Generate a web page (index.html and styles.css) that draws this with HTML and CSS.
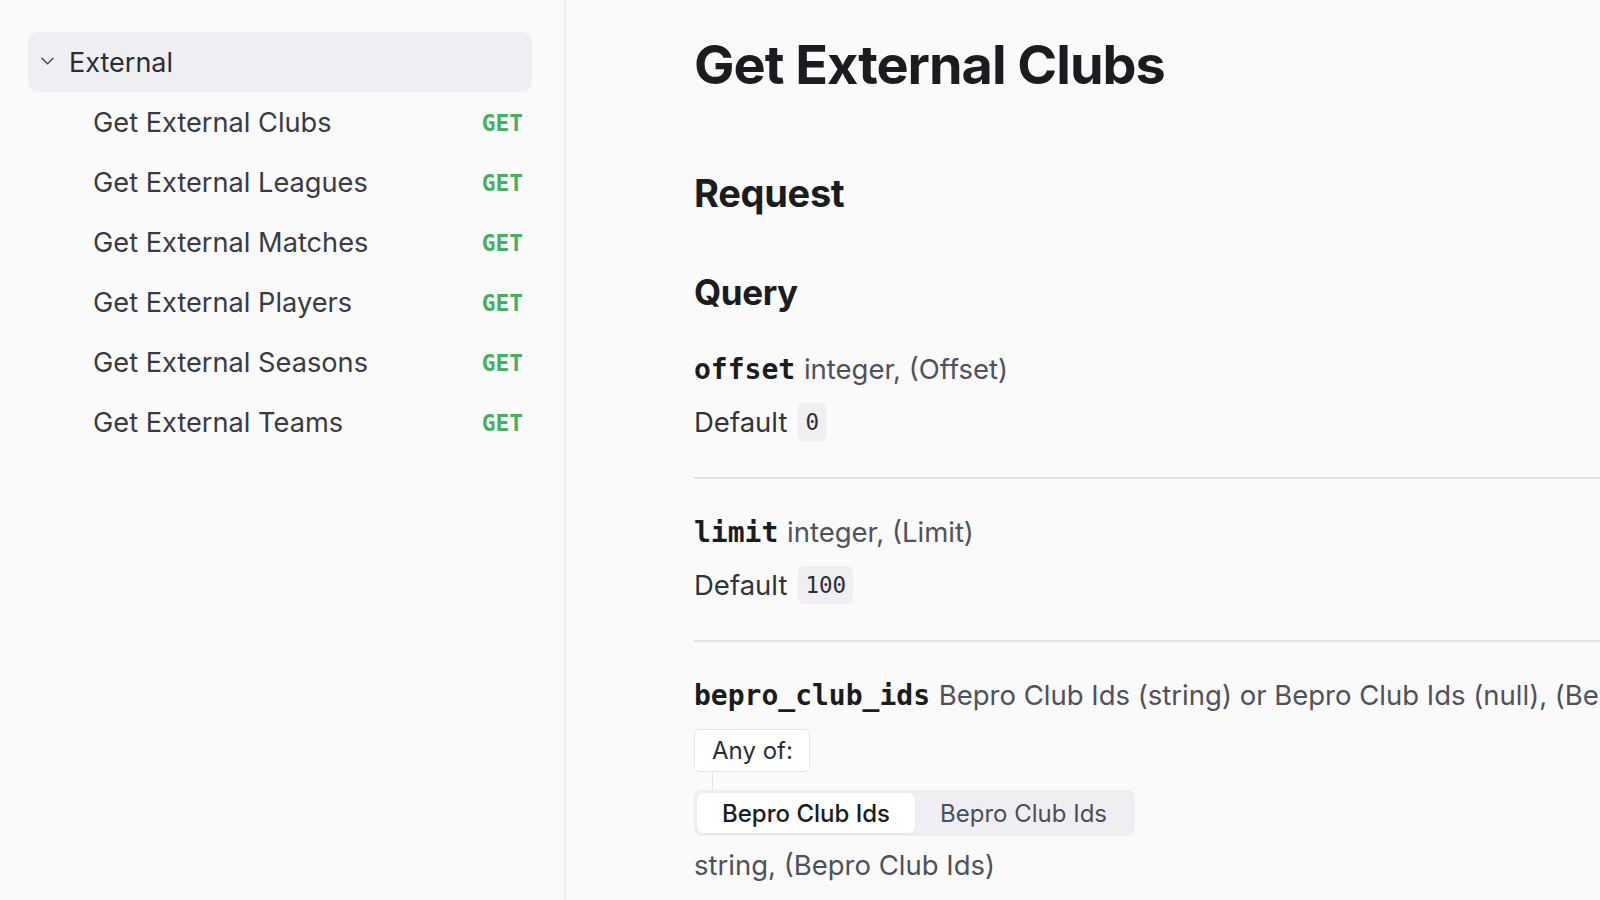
FILE: index.html
```html
<!DOCTYPE html>
<html lang="en">
<head>
<meta charset="utf-8">
<title>Get External Clubs</title>
<link rel="stylesheet" href="styles.css">
</head>
<body>
<div class="layout">
  <aside class="sidebar">
    <div class="group-header">
      <svg class="chevron" width="13" height="8" viewBox="0 0 13 8"><path d="M1 1.2l5.5 5.5 5.5-5.5" fill="none" stroke="#4a4b52" stroke-width="1.5" stroke-linecap="round" stroke-linejoin="round"/></svg>
      <span>External</span>
    </div>
    <ul class="nav">
      <li class="nav-item"><span>Get External Clubs</span><span class="method">GET</span></li>
      <li class="nav-item"><span>Get External Leagues</span><span class="method">GET</span></li>
      <li class="nav-item"><span>Get External Matches</span><span class="method">GET</span></li>
      <li class="nav-item"><span>Get External Players</span><span class="method">GET</span></li>
      <li class="nav-item"><span>Get External Seasons</span><span class="method">GET</span></li>
      <li class="nav-item"><span>Get External Teams</span><span class="method">GET</span></li>
    </ul>
  </aside>
  <main class="main">
    <h1 class="title">Get External Clubs</h1>
    <h2 class="section">Request</h2>
    <h3 class="subsection">Query</h3>
    <div class="param">
      <div class="param-head"><code class="param-name">offset</code> <span class="param-desc">integer, (Offset)</span></div>
      <div class="default-row"><span>Default</span><code class="pill">0</code></div>
    </div>
    <div class="param">
      <div class="param-head"><code class="param-name">limit</code> <span class="param-desc">integer, (Limit)</span></div>
      <div class="default-row"><span>Default</span><code class="pill">100</code></div>
    </div>
    <div class="param param-last">
      <div class="param-head"><code class="param-name">bepro_club_ids</code> <span class="param-desc">Bepro Club Ids (string) or Bepro Club Ids (null), (Bepro Club Ids)</span></div>
      <div class="anyof">Any of:</div>
      <div class="connector"></div>
      <div class="tabs">
        <span class="tab tab-active">Bepro Club Ids</span>
        <span class="tab">Bepro Club Ids</span>
      </div>
      <div class="type-row">string, (Bepro Club Ids)</div>
    </div>
  </main>
</div>
</body>
</html>
```
FILE: styles.css
```css
html, body {
  margin: 0;
  padding: 0;
  background: #fafafa;
  height: 100%;
  overflow: hidden;
}
body {
  font-family: Inter, "Noto Sans", "Liberation Sans", sans-serif;
  color: #1c1d21;
}
.layout {
  display: flex;
  height: 900px;
}
.sidebar {
  width: 566px;
  flex: none;
  box-sizing: border-box;
  border-right: 2px solid #ececee;
  padding: 32px 32px 0 28px;
}
.group-header {
  height: 60px;
  display: flex;
  align-items: center;
  padding-left: 13px;
  background: #eeeef3;
  border-radius: 10px;
  font-size: 27px;
  color: #2c2d33;
}
.chevron {
  margin-right: 15px;
  margin-top: -3px;
  flex: none;
}
.nav {
  list-style: none;
  margin: 0;
  padding: 0;
}
.nav-item {
  height: 60px;
  display: flex;
  align-items: center;
  justify-content: space-between;
  padding: 0 9px 0 65px;
  font-size: 27.2px;
  color: #3a3b42;
}
.method {
  font-family: "DejaVu Sans Mono", "Liberation Mono", monospace;
  font-weight: 700;
  font-size: 22.8px;
  color: #45b060;
  padding-top: 2px;
}
.main {
  flex: 1;
  min-width: 0;
  padding: 31px 0 0 128px;
  overflow: hidden;
}
.title {
  margin: 0;
  font-size: 54px;
  line-height: 67px;
  font-weight: 700;
  letter-spacing: -1px;
  color: #1b1c20;
  white-space: nowrap;
}
.section {
  margin: 73px 0 0;
  font-size: 38px;
  line-height: 44px;
  font-weight: 700;
  letter-spacing: -0.3px;
  color: #1b1c20;
}
.subsection {
  margin: 56px 0 36px;
  font-size: 35px;
  line-height: 42px;
  font-weight: 700;
  letter-spacing: -0.4px;
  color: #1b1c20;
}
.param {
  padding: 33px 0 35px;
  border-bottom: 2px solid #e3e3e7;
}
.param:first-of-type {
  padding-top: 0;
}
.param-last {
  border-bottom: none;
}
.param-head {
  line-height: 40px;
  height: 40px;
  white-space: nowrap;
  font-size: 27.5px;
}
.param-name {
  font-family: "DejaVu Sans Mono", "Liberation Mono", monospace;
  font-weight: 700;
  font-size: 28px;
  color: #1b1c20;
  margin-right: 1px;
}
.param-desc {
  color: #50515a;
}
.default-row {
  margin-top: 13px;
  height: 40px;
  display: flex;
  align-items: center;
  gap: 11px;
  font-size: 27.5px;
  color: #33343a;
}
.pill {
  font-family: "DejaVu Sans Mono", "Liberation Mono", monospace;
  font-size: 22.5px;
  line-height: 38px;
  padding: 0 7px;
  background: #eeeef3;
  border-radius: 6px;
  color: #2c2d33;
}
.anyof {
  margin-top: 14px;
  display: inline-flex;
  align-items: center;
  height: 43px;
  box-sizing: border-box;
  padding: 0 16px 0 17px;
  background: #ffffff;
  border: 1px solid #e6e6ea;
  border-radius: 6px;
  font-size: 24px;
  color: #2c2d33;
}
.connector {
  width: 1px;
  height: 18px;
  margin-left: 18px;
  background: #e3e3e7;
}
.tabs {
  display: inline-flex;
  height: 46px;
  box-sizing: border-box;
  padding: 3px;
  background: #eeeef3;
  border-radius: 8px;
}
.tab {
  display: flex;
  align-items: center;
  padding: 0 25px;
  border-radius: 6px;
  font-size: 24px;
  color: #4d4e57;
}
.tab-active {
  background: #ffffff;
  color: #1b1c20;
  font-weight: 500;
  box-shadow: 0 1px 2px rgba(0, 0, 0, 0.06);
}
.type-row {
  margin-top: 9px;
  line-height: 40px;
  font-size: 27.5px;
  color: #50515a;
}
```
